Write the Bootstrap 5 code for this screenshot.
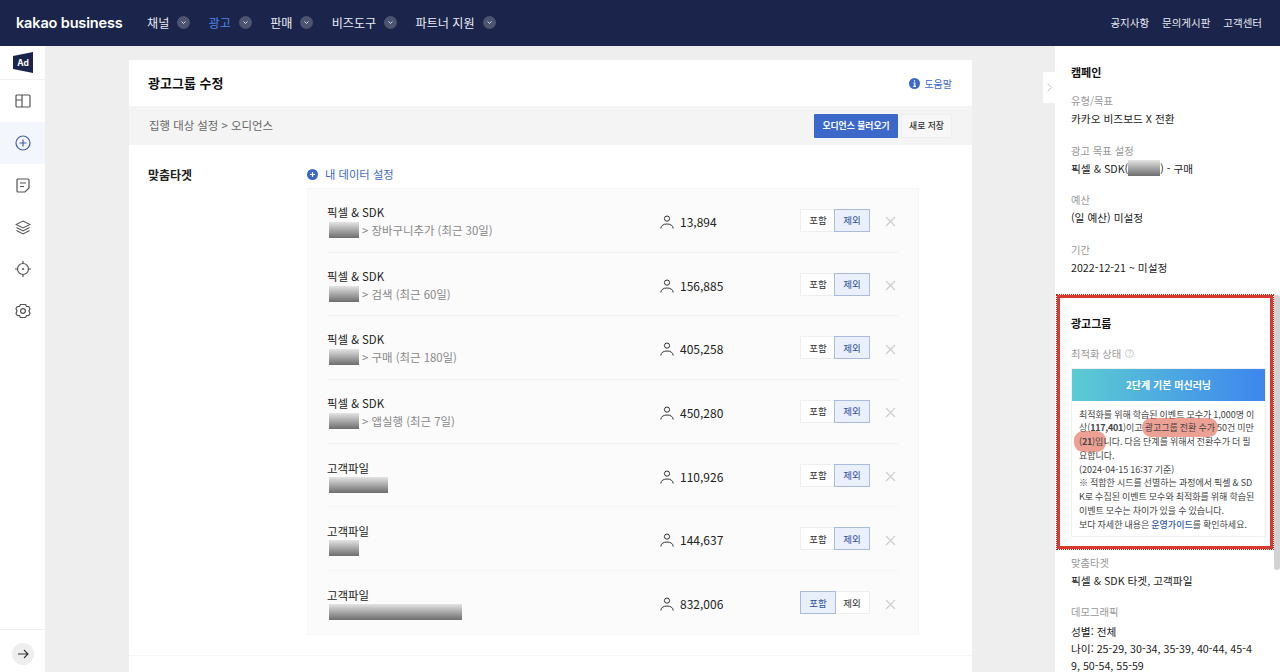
<!DOCTYPE html>
<html lang="ko">
<head>
<meta charset="UTF-8">
<title>광고그룹 수정</title>
<link href="https://cdn.jsdelivr.net/npm/bootstrap@5.3.0/dist/css/bootstrap.min.css" rel="stylesheet">
<style>
    html, body { height: 100%; overflow: hidden; }
    body { font-family: "Noto Sans CJK KR", "Noto Sans", sans-serif; font-size: 11px; color: #222; background: #eee; }
    .top-bar { height: 46px; background: #1b244b; padding: 0 18px 0 16px; color: #fff; }
    .brand-name { font-family: Inter, sans-serif; font-weight: 600; font-size: 14.5px; letter-spacing: -.15px; width: 131px; }
    .top-item { font-size: 12.1px; color: #eceef4; margin-right: 18.3px; }
    .top-item.is-on { color: #4f86e8; }
    .chev { width: 13px; height: 13px; border-radius: 50%; background: #4d5470; margin-left: 8px; }
    .util-item { font-size: 10.5px; color: #e8eaf0; margin-left: 13px; }
    .app-body { height: 626px; }
    .side-rail { width: 45px; background: #fff; flex: none; }
    .rail-logo { height: 34px; border-bottom: 1px solid #f2f2f2; }
    .rail-item { height: 42px; }
    .rail-item.is-on { background: #f3f6fc; }
    .rail-foot { height: 43px; border-top: 1px solid #eee; padding-top: 6px; }
    .round-btn { width: 22px; height: 22px; border-radius: 50%; background: #eee; }
    .main-area { flex: 1; min-width: 0; padding: 14px 83px 0 84px; position: relative; }
    .edit-card { background: #fff; height: 640px; }
    .card-head { height: 46px; padding: 0 20px 0 19px; }
    .card-title-text { font-size: 13px; font-weight: 700; color: #111; }
    .help-link { color: #3f69c4; font-size: 10px; }
    .tool-row { height: 39px; background: #f4f4f4; padding: 0 20px 0 20px; color: #666; font-size: 11.4px; }
    .btn-load { background: #3b68c9; color: #fff; font-size: 8.8px; font-weight: 700; border-radius: 1px; padding: 0; width: 84px; height: 24px; border: 0; }
    .btn-save { background: #f7f7f7; color: #333; font-size: 8.8px; font-weight: 500; border: 1px solid #eee; border-radius: 1px; padding: 0; width: 51px; height: 24px; margin-left: 3px; }
    .target-area { padding: 20px 53px 0 19px; }
    .target-label { width: 159px; font-size: 12px; font-weight: 700; padding-top: 1px; }
    .data-link { color: #3f69c4; font-size: 11.3px; height: 18px; margin-bottom: 6px; }
    .data-link svg { margin-right: 7px; }
    .data-box { background: #fbfbfb; border: 1px solid #f6f6f6; padding: 0 20px 0 19px; height: 447px; margin-top: -1px; }
    .data-row { height: 63.7px; border-bottom: 1px solid #f3f3f3; padding-top: 3px; }
    .data-row:last-child { border-bottom: 0; }
    .data-name { width: 333px; line-height: 18px; font-size: 11.4px; color: #222; margin-top: -2px; }
    .data-sub { color: #888; display: flex; align-items: center; }
    .blur-bar { display: inline-block; height: 16px; background: linear-gradient(#e4e4e4, #6d6d6d); margin: 0 3px 0 2px; }
    .data-count { width: 140px; font-size: 12px; color: #222; }
    .data-count svg { margin-right: 6px; }
    .toggle-wrap { width: 70px; height: 23px; background: #fff; border: 1px solid #eee; margin-top: -3px; }
    .toggle-opt { width: 34px; height: 21px; font-size: 9.5px; color: #333; display: flex; align-items: center; justify-content: center; }
    .toggle-opt.is-on { background: #e9f0fb; color: #2c4f9c; outline: 1px solid #a9bcdc; }
    .del-x { margin-left: 15px; }
    .foot-line { border-top: 1px solid #f5f5f5; margin-top: 20px; }
    .fold-tab { position: absolute; right: 0; top: 26px; width: 12px; height: 31px; background: #fff; color: #ccc; }
    .info-panel { width: 225px; flex: none; background: #fff; position: relative; overflow: hidden; padding: 0 16px; }
    .info-head { font-size: 11px; font-weight: 700; color: #111; margin: 18px 0 13px; line-height: 16px; }
    .info-label { font-size: 10.3px; color: #999; line-height: 16px; }
    .info-val { font-size: 10.7px; color: #222; line-height: 19px; margin-bottom: 14.5px; }
    .mark-frame { margin: 18px -9px 0 -14px; padding: 17px 5px 6px 11px; border: 3px solid #d93a2f; outline: 1px dotted #c81e14; height: 254px; }
    .mark-frame .info-head { margin: 0 0 15px; }
    .state-box { width: 195px; border: 1px solid #f0f0f0; margin-top: 6px; }
    .state-title { height: 32px; background: linear-gradient(90deg, #5cccd3, #3d86ee); color: #fff; font-size: 10px; font-weight: 700; }
    .state-text { padding: 7px 5px 4px 7px; font-size: 9px; line-height: 13.8px; color: #444; word-break: break-all; word-spacing: -.5px; }
    .state-text b { letter-spacing: -.3px; }
    .state-text a { color: #2f58aa; text-decoration: none; font-weight: 500; }
    .hl { background: rgba(222, 84, 62, .55); border-radius: 9px; padding: 3px 3px; margin: 0 -3px; }
    .hl-start { padding: 4px 3px 4px 5px; margin-left: -5px; }
    .mini-q { width: 9px; height: 9px; border-radius: 50%; border: 1px solid #ccc; color: #bbb; font-size: 7px; line-height: 7px; margin-left: 4px; }
    .scroll-thumb { position: absolute; right: 0; top: 249px; width: 6px; height: 275px; background: #d2d2d2; border-radius: 3px; }
    .after-frame { padding-top: 6px; }
    .info-val.tight { margin-bottom: 0; margin-top: 3px; line-height: 17px; }
    .info-val.tight + .info-val.tight { margin-top: 0; }
</style>
</head>
<body>
<nav class="top-bar d-flex align-items-center">
    <div class="brand-name">kakao business</div>
    <div class="top-item d-flex align-items-center">채널<span class="chev d-flex align-items-center justify-content-center"><svg width="7" height="7" viewBox="0 0 7 7"><path d="M1.5 2.5 3.5 4.5 5.5 2.5" fill="none" stroke="#d8dbe6" stroke-width="1"/></svg></span></div>
    <div class="top-item is-on d-flex align-items-center">광고<span class="chev d-flex align-items-center justify-content-center"><svg width="7" height="7" viewBox="0 0 7 7"><path d="M1.5 2.5 3.5 4.5 5.5 2.5" fill="none" stroke="#d8dbe6" stroke-width="1"/></svg></span></div>
    <div class="top-item d-flex align-items-center">판매<span class="chev d-flex align-items-center justify-content-center"><svg width="7" height="7" viewBox="0 0 7 7"><path d="M1.5 2.5 3.5 4.5 5.5 2.5" fill="none" stroke="#d8dbe6" stroke-width="1"/></svg></span></div>
    <div class="top-item d-flex align-items-center">비즈도구<span class="chev d-flex align-items-center justify-content-center"><svg width="7" height="7" viewBox="0 0 7 7"><path d="M1.5 2.5 3.5 4.5 5.5 2.5" fill="none" stroke="#d8dbe6" stroke-width="1"/></svg></span></div>
    <div class="top-item d-flex align-items-center">파트너 지원<span class="chev d-flex align-items-center justify-content-center"><svg width="7" height="7" viewBox="0 0 7 7"><path d="M1.5 2.5 3.5 4.5 5.5 2.5" fill="none" stroke="#d8dbe6" stroke-width="1"/></svg></span></div>
    <div class="ms-auto d-flex">
        <div class="util-item">공지사항</div>
        <div class="util-item">문의게시판</div>
        <div class="util-item">고객센터</div>
    </div>
</nav>

<div class="app-body d-flex">
    <aside class="side-rail d-flex flex-column">
        <div class="rail-logo d-flex align-items-center justify-content-center">
            <svg width="22" height="21" viewBox="0 0 22 21"><path d="M1 4 21 0V21L1 17Z" fill="#1b244b"/><text x="11" y="14" text-anchor="middle" font-family="Inter, sans-serif" font-size="8.5" font-weight="700" fill="#fff">Ad</text></svg>
        </div>
        <div class="rail-item d-flex align-items-center justify-content-center">
            <svg width="16" height="14" viewBox="0 0 16 14" fill="none" stroke="#555" stroke-width="1.2"><rect x="1" y="1" width="14" height="12" rx="1"/><path d="M7 1V13M1 6H7"/></svg>
        </div>
        <div class="rail-item is-on d-flex align-items-center justify-content-center">
            <svg width="16" height="16" viewBox="0 0 16 16" fill="none" stroke="#3f5fa8" stroke-width="1.2"><circle cx="8" cy="8" r="7"/><path d="M8 4.5V11.5M4.5 8H11.5"/></svg>
        </div>
        <div class="rail-item d-flex align-items-center justify-content-center">
            <svg width="14" height="15" viewBox="0 0 14 15" fill="none" stroke="#555" stroke-width="1.2"><path d="M2 1H12A1 1 0 0 1 13 2V10L9 14H2A1 1 0 0 1 1 13V2A1 1 0 0 1 2 1Z"/><path d="M4 5H10M4 8.5H8"/></svg>
        </div>
        <div class="rail-item d-flex align-items-center justify-content-center">
            <svg width="16" height="15" viewBox="0 0 16 15" fill="none" stroke="#555" stroke-width="1.1"><path d="M8 1 15 4.5 8 8 1 4.5Z"/><path d="M1.5 7.5 8 11 14.5 7.5M1.5 10.5 8 14 14.5 10.5"/></svg>
        </div>
        <div class="rail-item d-flex align-items-center justify-content-center">
            <svg width="18" height="18" viewBox="0 0 18 18" fill="none" stroke="#555" stroke-width="1.2"><circle cx="9" cy="9" r="5.5"/><path d="M9 1V3.5M9 14.5V17M1 9H3.5M14.5 9H17"/><circle cx="9" cy="9" r="1" fill="#555" stroke="none"/></svg>
        </div>
        <div class="rail-item d-flex align-items-center justify-content-center">
            <svg width="16" height="16" viewBox="0 0 16 16" fill="none" stroke="#555" stroke-width="1.2"><path d="M5.5 1.5H10.5L11.5 3.4 13.7 3.5 15 5.6 14 8 15 10.4 13.7 12.5 11.5 12.6 10.5 14.5H5.5L4.5 12.6 2.3 12.5 1 10.4 2 8 1 5.6 2.3 3.5 4.5 3.4Z"/><circle cx="8" cy="8" r="2.4"/></svg>
        </div>
        <div class="rail-foot mt-auto d-flex align-items-center justify-content-center">
            <div class="round-btn d-flex align-items-center justify-content-center">
                <svg width="12" height="12" viewBox="0 0 12 12" fill="none" stroke="#333" stroke-width="1.1"><path d="M1 6H11M7 2 11 6 7 10"/></svg>
            </div>
        </div>
    </aside>

    <main class="main-area">
        <div class="edit-card">
            <div class="card-head d-flex align-items-center justify-content-between">
                <div class="card-title-text">광고그룹 수정</div>
                <div class="help-link d-flex align-items-center">
                    <svg class="me-1" width="11" height="11" viewBox="0 0 11 11"><circle cx="5.5" cy="5.5" r="5.5" fill="#3b68c9"/><path d="M5.5 2.3V3.5M4.4 5H5.8V8.3M4.2 8.3H7" fill="none" stroke="#fff" stroke-width="1.2"/></svg>도움말
                </div>
            </div>
            <div class="tool-row d-flex align-items-center justify-content-between">
                <div>집행 대상 설정 &gt; 오디언스</div>
                <div class="d-flex">
                    <button class="btn btn-load" type="button">오디언스 불러오기</button>
                    <button class="btn btn-save" type="button">새로 저장</button>
                </div>
            </div>
            <div class="target-area d-flex">
                <div class="target-label">맞춤타겟</div>
                <div class="flex-grow-1">
                    <div class="data-link d-flex align-items-center">
                        <svg width="11" height="11" viewBox="0 0 11 11"><circle cx="5.5" cy="5.5" r="5.5" fill="#3b68c9"/><path d="M5.5 3V8M3 5.5H8" stroke="#fff" stroke-width="1.2"/></svg>내 데이터 설정
                    </div>
                    <div class="data-box" id="data-box"></div>
                </div>
            </div>
            <div class="foot-line"></div>
        </div>
        <div class="fold-tab d-flex align-items-center justify-content-center">
            <svg width="5" height="9" viewBox="0 0 5 9"><path d="M.5 .5 4.5 4.5 .5 8.5" fill="none" stroke="#ccc"/></svg>
        </div>
    </main>

    <aside class="info-panel">
        <div class="info-head">캠페인</div>
        <div class="info-label">유형/목표</div>
        <div class="info-val">카카오 비즈보드 X 전환</div>
        <div class="info-label">광고 목표 설정</div>
        <div class="info-val d-flex align-items-center">픽셀 &amp; SDK(<span class="blur-bar m-0" style="width: 32px"></span>) - 구매</div>
        <div class="info-label">예산</div>
        <div class="info-val">(일 예산) 미설정</div>
        <div class="info-label">기간</div>
        <div class="info-val">2022-12-21 ~ 미설정</div>

        <section class="mark-frame">
            <div class="info-head">광고그룹</div>
            <div class="info-label d-flex align-items-center">최적화 상태<span class="mini-q d-flex align-items-center justify-content-center">?</span></div>
            <div class="state-box">
                <div class="state-title d-flex align-items-center justify-content-center">2단계 기본 머신러닝</div>
                <div class="state-text">
                    최적화를 위해 학습된 이벤트 모수가 1,000명 이<br>상(<b>117,401</b>)이고 <span class="hl">광고그룹 전환 수가</span> 50건 미만<br><span class="hl hl-start">(<b>21</b>)입</span>니다. 다음 단계를 위해서 전환수가 더 필<br>요합니다.<br>
                    (2024-04-15 16:37 기준)<br>
                    ※ 적합한 시드를 선별하는 과정에서 픽셀 &amp; SD<br>K로 수집된 이벤트 모수와 최적화를 위해 학습된<br>이벤트 모수는 차이가 있을 수 있습니다.<br>
                    보다 자세한 내용은 <a href="#">운영가이드</a>를 확인하세요.
                </div>
            </div>
        </section>

        <div class="after-frame">
            <div class="info-label">맞춤타겟</div>
            <div class="info-val">픽셀 &amp; SDK 타겟, 고객파일</div>
            <div class="info-label">데모그래픽</div>
            <div class="info-val tight">성별: 전체</div>
            <div class="info-val tight">나이: 25-29, 30-34, 35-39, 40-44, 45-4<br>9, 50-54, 55-59</div>
        </div>
        <div class="scroll-thumb"></div>
    </aside>
</div>

<script src="https://cdn.jsdelivr.net/npm/bootstrap@5.3.0/dist/js/bootstrap.bundle.min.js"></script>
<script>
// rows of the audience list
const rows = [
    { name: "픽셀 & SDK", blur: 31, sub: "> 장바구니추가 (최근 30일)", count: "13,894", on: "제외" },
    { name: "픽셀 & SDK", blur: 31, sub: "> 검색 (최근 60일)", count: "156,885", on: "제외" },
    { name: "픽셀 & SDK", blur: 31, sub: "> 구매 (최근 180일)", count: "405,258", on: "제외" },
    { name: "픽셀 & SDK", blur: 31, sub: "> 앱실행 (최근 7일)", count: "450,280", on: "제외" },
    { name: "고객파일", blur: 60, sub: "", count: "110,926", on: "제외" },
    { name: "고객파일", blur: 31, sub: "", count: "144,637", on: "제외" },
    { name: "고객파일", blur: 134, sub: "", count: "832,006", on: "포함" }
];

const userIcon = `<svg width="14" height="14" viewBox="0 0 14 14" fill="none" stroke="#333" stroke-width="1"><circle cx="7" cy="3.6" r="2.6"/><path d="M.8 13.5C1 10.6 3.4 9 7 9s6 1.6 6.2 4.5"/></svg>`;
const closeIcon = `<svg class="del-x" width="11" height="11" viewBox="0 0 11 11"><path d="M1 1 10 10M10 1 1 10" stroke="#ccc" stroke-width="1.1"/></svg>`;

document.getElementById("data-box").innerHTML = rows.map(r => `
    <div class="data-row d-flex align-items-center">
        <div class="data-name">
            <div>${r.name}</div>
            <div class="data-sub"><span class="blur-bar" style="width: ${r.blur - 1}px"></span>${r.sub.replace(">", "&gt;")}</div>
        </div>
        <div class="data-count d-flex align-items-center">${userIcon}${r.count}</div>
        <div class="toggle-wrap d-flex">
            <div class="toggle-opt ${r.on === "포함" ? "is-on" : ""}">포함</div>
            <div class="toggle-opt ${r.on === "제외" ? "is-on" : ""}">제외</div>
        </div>
        ${closeIcon}
    </div>`).join("");
</script>
</body>
</html>
